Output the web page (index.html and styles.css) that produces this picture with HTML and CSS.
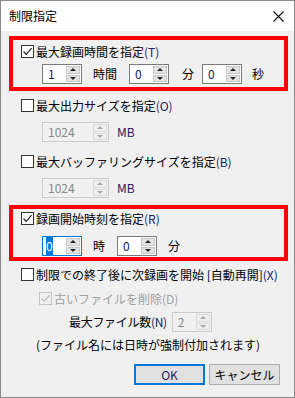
FILE: index.html
```html
<!DOCTYPE html>
<html lang="ja">
<head>
<meta charset="utf-8">
<link rel="stylesheet" href="styles.css">
</head>
<body>
<div class="window">
  <div class="titlebar">
    <span class="title">制限指定</span>
    <svg class="close" width="11" height="11" viewBox="0 0 11 11"><path d="M0.5 0.5 L10.5 10.5 M10.5 0.5 L0.5 10.5" stroke="#111" stroke-width="1.1" fill="none"/></svg>
  </div>
  <div class="content">
    <div class="cb-row m-a">
      <span class="cb"><svg viewBox="0 0 11 11" width="11" height="11"><path d="M1.5 5.5 L4.2 8.3 L9.6 2.2" stroke="#222" stroke-width="1.2" fill="none"/></svg></span>
      <span class="lbl">最大録画時間を指定<span class="lat">(T)</span></span>
    </div>
    <div class="sp-row m-b">
      <div class="spin w40"><span class="val lat">1</span><span class="ud"><span class="up"></span><span class="dn"></span></span></div>
      <span class="unit pad-jikan">時間</span>
      <div class="spin w40"><span class="val lat">0</span><span class="ud"><span class="up"></span><span class="dn"></span></span></div>
      <span class="unit pad-fun">分</span>
      <div class="spin w40"><span class="val lat">0</span><span class="ud"><span class="up"></span><span class="dn"></span></span></div>
      <span class="unit pad-byo">秒</span>
    </div>

    <div class="cb-row m-c">
      <span class="cb"></span>
      <span class="lbl">最大出力サイズを指定<span class="lat">(O)</span></span>
    </div>
    <div class="sp-row m-d">
      <div class="spin w67 disabled"><span class="val">1024</span><span class="ud"><span class="up"></span><span class="dn"></span></span></div>
      <span class="unit pad-mb lat">MB</span>
    </div>

    <div class="cb-row m-e">
      <span class="cb"></span>
      <span class="lbl">最大バッファリングサイズを指定<span class="lat">(B)</span></span>
    </div>
    <div class="sp-row m-d">
      <div class="spin w67 disabled"><span class="val">1024</span><span class="ud"><span class="up"></span><span class="dn"></span></span></div>
      <span class="unit pad-mb lat">MB</span>
    </div>

    <div class="cb-row m-f">
      <span class="cb"><svg viewBox="0 0 11 11" width="11" height="11"><path d="M1.5 5.5 L4.2 8.3 L9.6 2.2" stroke="#222" stroke-width="1.2" fill="none"/></svg></span>
      <span class="lbl">録画開始時刻を指定<span class="lat">(R)</span></span>
    </div>
    <div class="sp-row m-g">
      <div class="spin w40 focused"><span class="val"><span class="sel">0</span></span><span class="ud"><span class="up"></span><span class="dn"></span></span></div>
      <span class="unit pad-ji">時</span>
      <div class="spin w40"><span class="val lat">0</span><span class="ud"><span class="up"></span><span class="dn"></span></span></div>
      <span class="unit pad-ji">分</span>
    </div>

    <div class="cb-row m-h">
      <span class="cb"></span>
      <span class="lbl">制限での終了後に次録画を開始 [自動再開]<span class="lat">(X)</span></span>
    </div>
    <div class="cb-row sub m-i">
      <span class="cb disabled"><svg viewBox="0 0 11 11" width="11" height="11"><path d="M1.5 5.5 L4.2 8.3 L9.6 2.2" stroke="#bcbcbc" stroke-width="1.2" fill="none"/></svg></span>
      <span class="lbl gray">古いファイルを削除(D)</span>
    </div>
    <div class="sp-row files m-j">
      <span class="flabel">最大ファイル数<span class="lat">(N)</span></span>
      <div class="spin w40 disabled"><span class="val">2</span><span class="ud"><span class="up"></span><span class="dn"></span></span></div>
    </div>
    <div class="note m-k">(ファイル名には日時が強制付加されます)</div>
    <div class="buttons">
      <button class="btn default"><span class="lat">OK</span></button>
      <button class="btn">キャンセル</button>
    </div>
  </div>
  <div class="redbox rb1"></div>
  <div class="redbox rb2"></div>
</div>
</body>
</html>
```
FILE: styles.css
```css
* { box-sizing: border-box; }
html, body { margin: 0; padding: 0; }
body {
  font-family: "Noto Sans CJK JP", "Noto Sans", sans-serif;
  font-size: 12px;
  color: #000;
  background: #fff;
}
.window {
  position: relative;
  width: 295px;
  height: 398px;
  border: 1px solid #8a8a8a;
  background: #f0f0f0;
  overflow: hidden;
}
.titlebar {
  height: 30px;
  background: #fff;
  display: flex;
  align-items: center;
  justify-content: space-between;
  padding: 0 10px 0 8px;
}
.title { font-size: 12px; line-height: 14px; }
.close { display: block; }

.content { padding-left: 20px; }

.cb-row {
  display: flex;
  align-items: center;
  height: 13px;
}
.cb-row.sub { padding-left: 18px; }
.cb {
  width: 13px;
  height: 13px;
  border: 1px solid #333;
  background: #fff;
  display: flex;
  align-items: center;
  justify-content: center;
  flex: none;
}
.cb.disabled { border-color: #c4c4c4; background: #f0f0f0; }
.lbl { margin-left: 2px; line-height: 14px; white-space: nowrap; }
.lbl.gray { color: #a0a0a0; }
.lat { color: #14245a; }

.sp-row {
  display: flex;
  align-items: center;
  height: 20px;
  padding-left: 21px;
}
.sp-row.files { padding-left: 48px; }
.flabel { margin-right: 5px; line-height: 14px; white-space: nowrap; letter-spacing: -0.3px; }

.spin {
  height: 20px;
  display: flex;
  border: 1px solid #7a7a7a;
  background: #fff;
  flex: none;
}
.w40 { width: 40px; }
.w67 { width: 67px; }
.spin .val {
  flex: 1;
  padding-left: 5px;
  line-height: 18px;
  font-size: 12px;
}
.spin .ud {
  width: 15px;
  display: flex;
  flex-direction: column;
  padding: 1px 1px 1px 0;
  gap: 1px;
}
.spin .ud span {
  flex: 1;
  background: #e3e3e3;
  border: 1px solid #c6c6c6;
  display: flex;
  align-items: center;
  justify-content: center;
}
.spin .ud .up::after {
  content: "";
  border-left: 3px solid transparent;
  border-right: 3px solid transparent;
  border-bottom: 3px solid #222;
}
.spin .ud .dn::after {
  content: "";
  border-left: 3px solid transparent;
  border-right: 3px solid transparent;
  border-top: 3px solid #222;
}
.spin.disabled { border-color: #cccccc; background: #f0f0f0; }
.spin.disabled .val { color: #8a8a8a; }
.spin.disabled .ud span { background: #f0f0f0; border-color: #dadada; }
.spin.disabled .ud .up::after { border-bottom-color: #a8a8a8; }
.spin.disabled .ud .dn::after { border-top-color: #a8a8a8; }
.spin.focused { border-color: #0078d7; }
.spin .sel { background: #0078d7; color: #fff; padding: 1px 0; }
.spin.focused .val { padding-left: 3px; }

.unit { line-height: 14px; white-space: nowrap; }
.pad-jikan { width: 47px; padding-left: 11px; }
.pad-fun { width: 33px; padding-left: 13px; }
.pad-byo { padding-left: 10px; }
.pad-mb { padding-left: 8px; }
.pad-ji { width: 35px; padding-left: 11px; }
.sp-row .pad-ji:last-child { width: auto; }

.note { padding-left: 15px; line-height: 14px; white-space: nowrap; }

.buttons {
  display: flex;
  gap: 4px;
  margin-top: 12px;
  padding-left: 113px;
}
.btn {
  width: 71px;
  height: 21px;
  font-family: inherit;
  font-size: 12px;
  background: #e1e1e1;
  border: 1px solid #adadad;
  color: #000;
  padding: 0;
  line-height: 14px;
}
.btn.default { border: 2px solid #0078d7; }

.m-a { margin-top: 14px; }
.m-b { margin-top: 6px; }
.m-c { margin-top: 15px; }
.m-d { margin-top: 10px; }
.m-e { margin-top: 13px; }
.m-f { margin-top: 14px; }
.m-g { margin-top: 11px; }
.m-h { margin-top: 12px; }
.m-i { margin-top: 11px; }
.m-j { margin-top: 7px; }
.m-k { margin-top: 6px; }

.redbox {
  position: absolute;
  border: 4px solid #f00;
  pointer-events: none;
}
.rb1 { left: 8px; top: 35px; width: 279px; height: 55px; }
.rb2 { left: 8px; top: 204px; width: 279px; height: 56px; }
```
